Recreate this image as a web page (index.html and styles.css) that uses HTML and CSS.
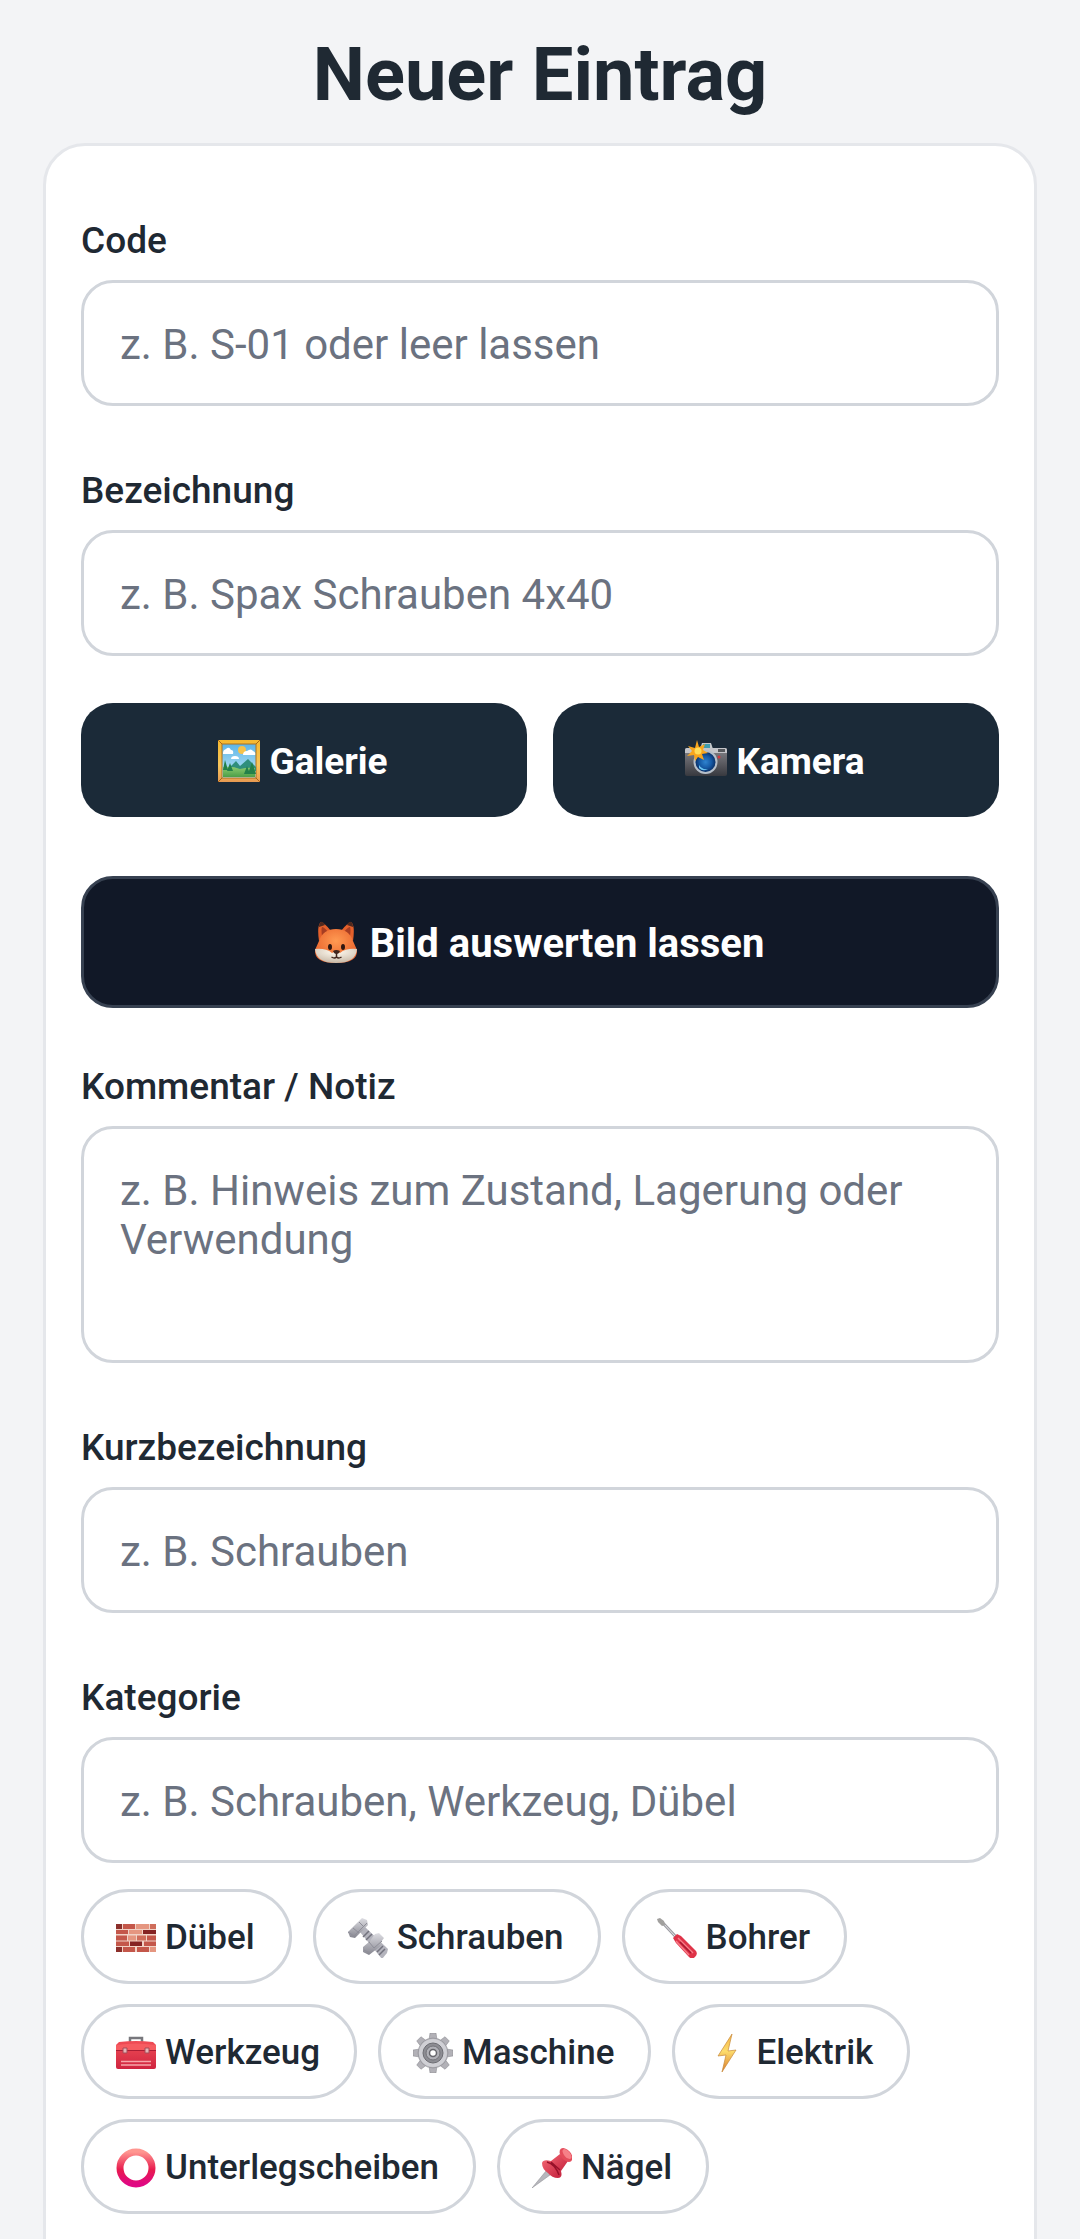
FILE: index.html
```html
<!DOCTYPE html>
<html lang="de">
  <head>
    <meta charset="utf-8">
    <meta name="viewport" content="width=device-width, initial-scale=1">
    <title>Neuer Eintrag</title>
    <link rel="stylesheet" href="styles.css">
  </head>
  <body>
    <h1 class="title">Neuer Eintrag</h1>

    <form class="card">
      <div class="field">
        <label for="code">Code</label>
        <input type="text" id="code" placeholder="z. B. S-01 oder leer lassen">
      </div>

      <div class="field">
        <label for="name">Bezeichnung</label>
        <input type="text" id="name" placeholder="z. B. Spax Schrauben 4x40">
      </div>

      <div class="photo-buttons">
        <button type="button" class="btn">
          <svg class="icon" viewBox="0 0 42 42" aria-hidden="true">
            <defs>
              <linearGradient id="frame" x1="0" y1="0" x2="0" y2="1"><stop offset="0" stop-color="#f5b82e"/><stop offset=".6" stop-color="#f7c65c"/><stop offset="1" stop-color="#e79a52"/></linearGradient>
              <linearGradient id="sky" x1="0" y1="0" x2="0" y2="1"><stop offset="0" stop-color="#5db5e8"/><stop offset="1" stop-color="#bfe8f4"/></linearGradient>
              <linearGradient id="grass" x1="0" y1="0" x2="0" y2="1"><stop offset="0" stop-color="#8ccb70"/><stop offset="1" stop-color="#4c9f48"/></linearGradient>
            </defs>
            <rect width="42" height="42" fill="url(#frame)"/>
            <path d="M0 0l4 4M42 0l-4 4M0 42l4-4M42 42l-4-4" stroke="#a86516" stroke-width="1"/>
            <rect x="4" y="4" width="34" height="34" fill="url(#sky)" stroke="#a9701f"/>
            <circle cx="24" cy="10" r="4" fill="#f6c34b"/>
            <path d="M5 13q0-3 3-4 3-3 5 1 3 0 2 4H5zM25 15q0-4 4-4 4-3 6 0 3 1 2 4zM13 19q0-3 4-3 4 0 4 3z" fill="#fff"/>
            <path d="M11 28l7-7 4 5 8-7 8 8v4H9z" fill="#2f8f7c"/>
            <path d="M5 27q10-1 17 2 8-2 15-1v9H5z" fill="url(#grass)"/>
            <path d="M7 20l3 10H5zM12 23l3 8H9zM34 22l4 12h-8zM29 26l3 8h-6z" fill="#23804a"/>
          </svg>
          Galerie
        </button>
        <button type="button" class="btn">
          <svg class="icon" viewBox="0 0 42 42" aria-hidden="true">
            <defs>
              <linearGradient id="body" x1="0" y1="0" x2="0" y2="1"><stop offset="0" stop-color="#85858a"/><stop offset="1" stop-color="#38393f"/></linearGradient>
              <radialGradient id="lens"><stop offset="0" stop-color="#2f83cf"/><stop offset=".6" stop-color="#1559a5"/><stop offset="1" stop-color="#0a3068"/></radialGradient>
            </defs>
            <path d="M15 9l2-6h9l2 6z" fill="#c3c7ca"/>
            <rect x="18" y="4" width="7" height="4" fill="#3e9cae"/>
            <rect y="8" width="42" height="28" rx="2" fill="url(#body)"/>
            <path d="M0 13v-3q0-2 2-2h38q2 0 2 2v3z" fill="#c4c5c9"/>
            <rect x="33" y="9" width="7" height="3" fill="#55585c"/>
            <circle cx="34" cy="17" r="1.500" fill="#d8373d"/>
            <circle cx="20.500" cy="22" r="12" fill="#b6bfc9"/>
            <circle cx="20.500" cy="22" r="10" fill="url(#lens)"/>
            <path d="M14 25q3 5 9 4-5 3-9-1z" fill="#68c4f2"/>
            <path d="M12 0l2 7 6-3-2 6 5 3-6 1 2 6-6-3-3 4-1-6-7 1 5-5-4-5 7 2z" fill="#f7a51d"/>
            <circle cx="13" cy="11" r="3.500" fill="#ffdc59"/>
          </svg>
          Kamera
        </button>
      </div>

      <button type="button" class="btn btn-analyze">
        <svg class="icon" viewBox="0 0 44 44" aria-hidden="true">
          <defs>
            <radialGradient id="fur" cx=".5" cy=".35" r=".6"><stop offset="0" stop-color="#ff9a52"/><stop offset="1" stop-color="#e8622c"/></radialGradient>
            <radialGradient id="cheek" cx=".5" cy=".2" r=".8"><stop offset="0" stop-color="#fffaf0"/><stop offset="1" stop-color="#c7b8a6"/></radialGradient>
          </defs>
          <path d="M5 20Q3 6 6 2q2-3 11 8zM39 20q2-14-1-18-2-3-11 8z" fill="#e4602b"/>
          <path d="M5 6q0-4 2-5 2-1 4 3zM39 6q0-4-2-5-2-1-4 3z" fill="#51291e"/>
          <path d="M8 15Q7 8 8 6q2 0 6 5zM36 15q1-7 0-9-2 0-6 5z" fill="#a63d22"/>
          <path d="M22 8q13 0 17 12l4 9q1 13-21 13T1 29l4-9Q9 8 22 8z" fill="url(#fur)"/>
          <path d="M1 28q11-1 17 4 4-3 8 0 6-5 17-4-1 14-21 14T1 28z" fill="url(#cheek)"/>
          <ellipse cx="16" cy="26" rx="2" ry="3" fill="#2f1711"/>
          <ellipse cx="29" cy="26" rx="2" ry="3" fill="#2f1711"/>
          <path d="M19 30q3-2 7 0-1 3-3.500 3T19 30z" fill="#40251d"/>
          <path d="M22.500 32v4m-5 0q3 2 5 0 2 2 5 0" fill="none" stroke="#40251d" stroke-width="1.500"/>
        </svg>
        Bild auswerten lassen
      </button>

      <div class="field field-comment">
        <label for="comment">Kommentar / Notiz</label>
        <textarea id="comment" placeholder="z. B. Hinweis zum Zustand, Lagerung oder Verwendung"></textarea>
      </div>

      <div class="field">
        <label for="short">Kurzbezeichnung</label>
        <input type="text" id="short" placeholder="z. B. Schrauben">
      </div>

      <div class="field">
        <label for="category">Kategorie</label>
        <input type="text" id="category" placeholder="z. B. Schrauben, Werkzeug, Dübel">
      </div>

      <div class="chips">
        <button type="button" class="chip">
          <svg class="icon" viewBox="0 0 40 40" aria-hidden="true">
            <rect y="6" width="40" height="28" fill="#f1d2c6"/>
            <path d="M0 6h6v5H0zM0 29h6v5H0z" fill="#8c2f2b"/>
            <path d="M7 6h12v5H7zM0 12h12v4H0zM0 17.500h11v5H0zM31 17.500h9v5h-9zM0 23.500h13v4.500H0zM28 23.500h12v4.500H28zM7 29h12v5H7zM21 29h12v5H21z" fill="#c4574a"/>
            <path d="M20 6h13v5H20zM13 12h13v4H13zM12 17.500h8v5h-8zM34 29h6v5h-6z" fill="#e59680"/>
            <path d="M34 6h6v5h-6zM21 17.500h9v5h-9z" fill="#cf6d5b"/>
            <path d="M27 12h13v4H27zM14 23.500h12v4.500H14z" fill="#852323"/>
          </svg>
          Dübel
        </button>
        <button type="button" class="chip">
          <svg class="icon" viewBox="0 0 40 40" aria-hidden="true">
            <defs>
              <linearGradient id="steel" x1="0" y1="0" x2="0" y2="1"><stop offset="0" stop-color="#dedee3"/><stop offset="1" stop-color="#85858f"/></linearGradient>
            </defs>
            <path d="M12 14l5-5 23 22-1 4-5 6z" fill="#b4b4bd"/>
            <path d="M15 19l6-6M18 22l6-6M21 25l6-6M31 37l6-6M29 34l6-6" stroke="#73737e" stroke-width="1.500"/>
            <path d="M0 14L14 0l5 2 1 5L7 20l-5-1z" fill="url(#steel)"/>
            <path d="M5 10l6 5M11 4l5 5M0 14l6 4 13-13" stroke="#8e8e98" fill="none"/>
            <path d="M21 24l6-8 4-1 5 5-3 4 1 3-13 10-6-3v-5z" fill="url(#steel)"/>
            <path d="M21 24l5 6 8-7M16 32l6 3" stroke="#8e8e98" fill="none"/>
          </svg>
          Schrauben
        </button>
        <button type="button" class="chip">
          <svg class="icon" viewBox="0 0 40 40" aria-hidden="true">
            <path d="M5 4l14 15" stroke="#9b9ba1" stroke-width="3"/>
            <path d="M5 4l14 15" stroke="#e7e7ea" stroke-width="1"/>
            <path d="M0 1l3-1 4 3 1 4-3 1-4-4z" fill="#a1a09e"/>
            <path d="M16 20l4-4 4 2 15 15q2 3-1 6-3 3-6 0L19 25z" fill="#df3348"/>
            <path d="M21 20l15 15M19 23l13 14" stroke="#f77c88" stroke-width="1.500"/>
            <path d="M23 24l11 11" stroke="#a9172f" stroke-width="1.500"/>
          </svg>
          Bohrer
        </button>
        <button type="button" class="chip">
          <svg class="icon" viewBox="0 0 40 40" aria-hidden="true">
            <defs>
              <linearGradient id="box" x1="0" y1="0" x2="0" y2="1"><stop offset="0" stop-color="#f04d56"/><stop offset="1" stop-color="#cf2440"/></linearGradient>
            </defs>
            <path d="M14 10V5h12v5" fill="none" stroke="#77777c" stroke-width="2.500"/>
            <path d="M0 12l3-3q17-2 34 0l3 3v22q0 2-2 2H2q-2 0-2-2z" fill="url(#box)"/>
            <path d="M0 12q20-3 40 0v5H0z" fill="#f65c61"/>
            <path d="M0 17.500h40" stroke="#a91d34"/>
            <path d="M7 15h4v5H7zM29 15h4v5h-4z" fill="#e3b4b7" stroke="#a74b57"/>
            <path d="M5 28.500h30M5 32h30" stroke="#f6a6aa" stroke-width="1.500"/>
          </svg>
          Werkzeug
        </button>
        <button type="button" class="chip">
          <svg class="icon" viewBox="0 0 40 40" aria-hidden="true">
            <g fill="#b2b1b7" stroke="#85858b" stroke-width=".5">
              <path id="teeth" d="M16 7l1-7h6l1 7zM16 33l1 7h6l1-7z"/>
              <use href="#teeth" transform="rotate(45 20 20)"/>
              <use href="#teeth" transform="rotate(90 20 20)"/>
              <use href="#teeth" transform="rotate(135 20 20)"/>
              <circle cx="20" cy="20" r="15"/>
            </g>
            <circle cx="20" cy="20" r="14" fill="#d0d0d5"/>
            <circle cx="20" cy="20" r="10" fill="#8d8d93" stroke="#6d6d73"/>
            <circle cx="20" cy="20" r="7" fill="#b0b0b6" stroke="#737379"/>
            <circle cx="20" cy="20" r="3.500" fill="#fff" stroke="#66666c" stroke-width="1.500"/>
          </svg>
          Maschine
        </button>
        <button type="button" class="chip">
          <svg class="icon" viewBox="0 0 40 40" aria-hidden="true">
            <defs>
              <linearGradient id="bolt" x1="0" y1="0" x2="0" y2="1"><stop offset="0" stop-color="#f5b343"/><stop offset=".45" stop-color="#fddd6d"/><stop offset="1" stop-color="#d9792b"/></linearGradient>
            </defs>
            <path d="M25 1L11 23l8-1-4 17 14-22-8 1z" fill="url(#bolt)" stroke="#c7893b" stroke-width=".7"/>
          </svg>
          Elektrik
        </button>
        <button type="button" class="chip">
          <svg class="icon" viewBox="0 0 40 40" aria-hidden="true">
            <defs>
              <linearGradient id="ring" x1="0" y1="0" x2="0" y2="1"><stop offset="0" stop-color="#ff9690"/><stop offset=".55" stop-color="#e81b4e"/><stop offset="1" stop-color="#e00883"/></linearGradient>
            </defs>
            <circle cx="20" cy="20" r="16" fill="none" stroke="url(#ring)" stroke-width="7"/>
          </svg>
          Unterlegscheiben
        </button>
        <button type="button" class="chip">
          <svg class="icon" viewBox="0 0 40 40" aria-hidden="true">
            <defs>
              <linearGradient id="pin" x1="0" y1="0" x2="1" y2="1"><stop offset="0" stop-color="#f76c76"/><stop offset="1" stop-color="#bd1736"/></linearGradient>
            </defs>
            <path d="M0 40l14-17 4 4z" fill="#b7b7bd" stroke="#88888f" stroke-width=".5"/>
            <path d="M10 15q1-4 9-2l9-7 8 7-7 10q2 7-3 7-6 0-10-5-6-4-6-10z" fill="url(#pin)"/>
            <path d="M15 14q8 2 12 13M19 14l9 8" fill="none" stroke="#981129" stroke-width="1.500"/>
            <ellipse cx="34" cy="7" rx="8" ry="5" transform="rotate(50 34 7)" fill="#e44c5b"/>
            <ellipse cx="35" cy="6" rx="6" ry="3" transform="rotate(50 35 6)" fill="#f68088"/>
          </svg>
          Nägel
        </button>
      </div>
    </form>
  </body>
</html>
```
FILE: styles.css
```css
* {
  box-sizing: border-box;
}
body {
  margin: 0;
  padding: 32px 43px 0;
  background-color: #f3f4f6;
  color: #1f2933;
  font-family: Roboto, sans-serif;
}
.title {
  margin: 0 0 25px;
  font-size: 74px;
  line-height: 86px;
  font-weight: 700;
  text-align: center;
}
.card {
  padding: 10px 35px 100px;
  background-color: #fff;
  border: 3px solid #e5e7eb;
  border-radius: 42px;
}
.field {
  padding-top: 63px;
}
.field-comment {
  padding-top: 57px;
}
.field label {
  display: block;
  margin-bottom: 18px;
  font-size: 37px;
  line-height: 43px;
  font-weight: 500;
}
.field input,
.field textarea {
  display: block;
  width: 100%;
  padding: 37px 36px 35px;
  border: 3px solid #d1d5db;
  border-radius: 32px;
  background-color: #fff;
  color: #1f2933;
  font-family: inherit;
  font-size: 42px;
  line-height: 49px;
}
.field input {
  height: 126px;
}
.field textarea {
  height: 237px;
  resize: none;
}
.field input::placeholder,
.field textarea::placeholder {
  color: #6b7280;
}
.photo-buttons {
  display: grid;
  grid-template-columns: 1fr 1fr;
  gap: 26px;
  margin: 47px 0 59px;
}
.btn {
  display: flex;
  align-items: center;
  justify-content: center;
  gap: 9px;
  height: 114px;
  padding: 2px 8px 0 6px;
  border: none;
  border-radius: 32px;
  background-color: #1b2a38;
  color: #fff;
  font-family: inherit;
  font-size: 37px;
  font-weight: 700;
  cursor: pointer;
}
.btn .icon {
  width: 42px;
  height: 42px;
}
.btn-analyze {
  gap: 12px;
  width: 100%;
  height: 132px;
  border: 3px solid #374151;
  background-color: #111827;
  font-size: 40px;
}
.btn-analyze .icon {
  width: 44px;
  height: 44px;
}
.chips {
  display: flex;
  flex-wrap: wrap;
  gap: 20px 21px;
  margin-top: 26px;
}
.chip {
  display: flex;
  align-items: center;
  gap: 9px;
  height: 95px;
  padding: 2px 34px 0 32px;
  border: 3px solid #d1d5db;
  border-radius: 48px;
  background-color: #fff;
  color: #1f2933;
  font-family: inherit;
  font-size: 35px;
  font-weight: 500;
  cursor: pointer;
}
.chip .icon {
  width: 40px;
  height: 40px;
}
```
